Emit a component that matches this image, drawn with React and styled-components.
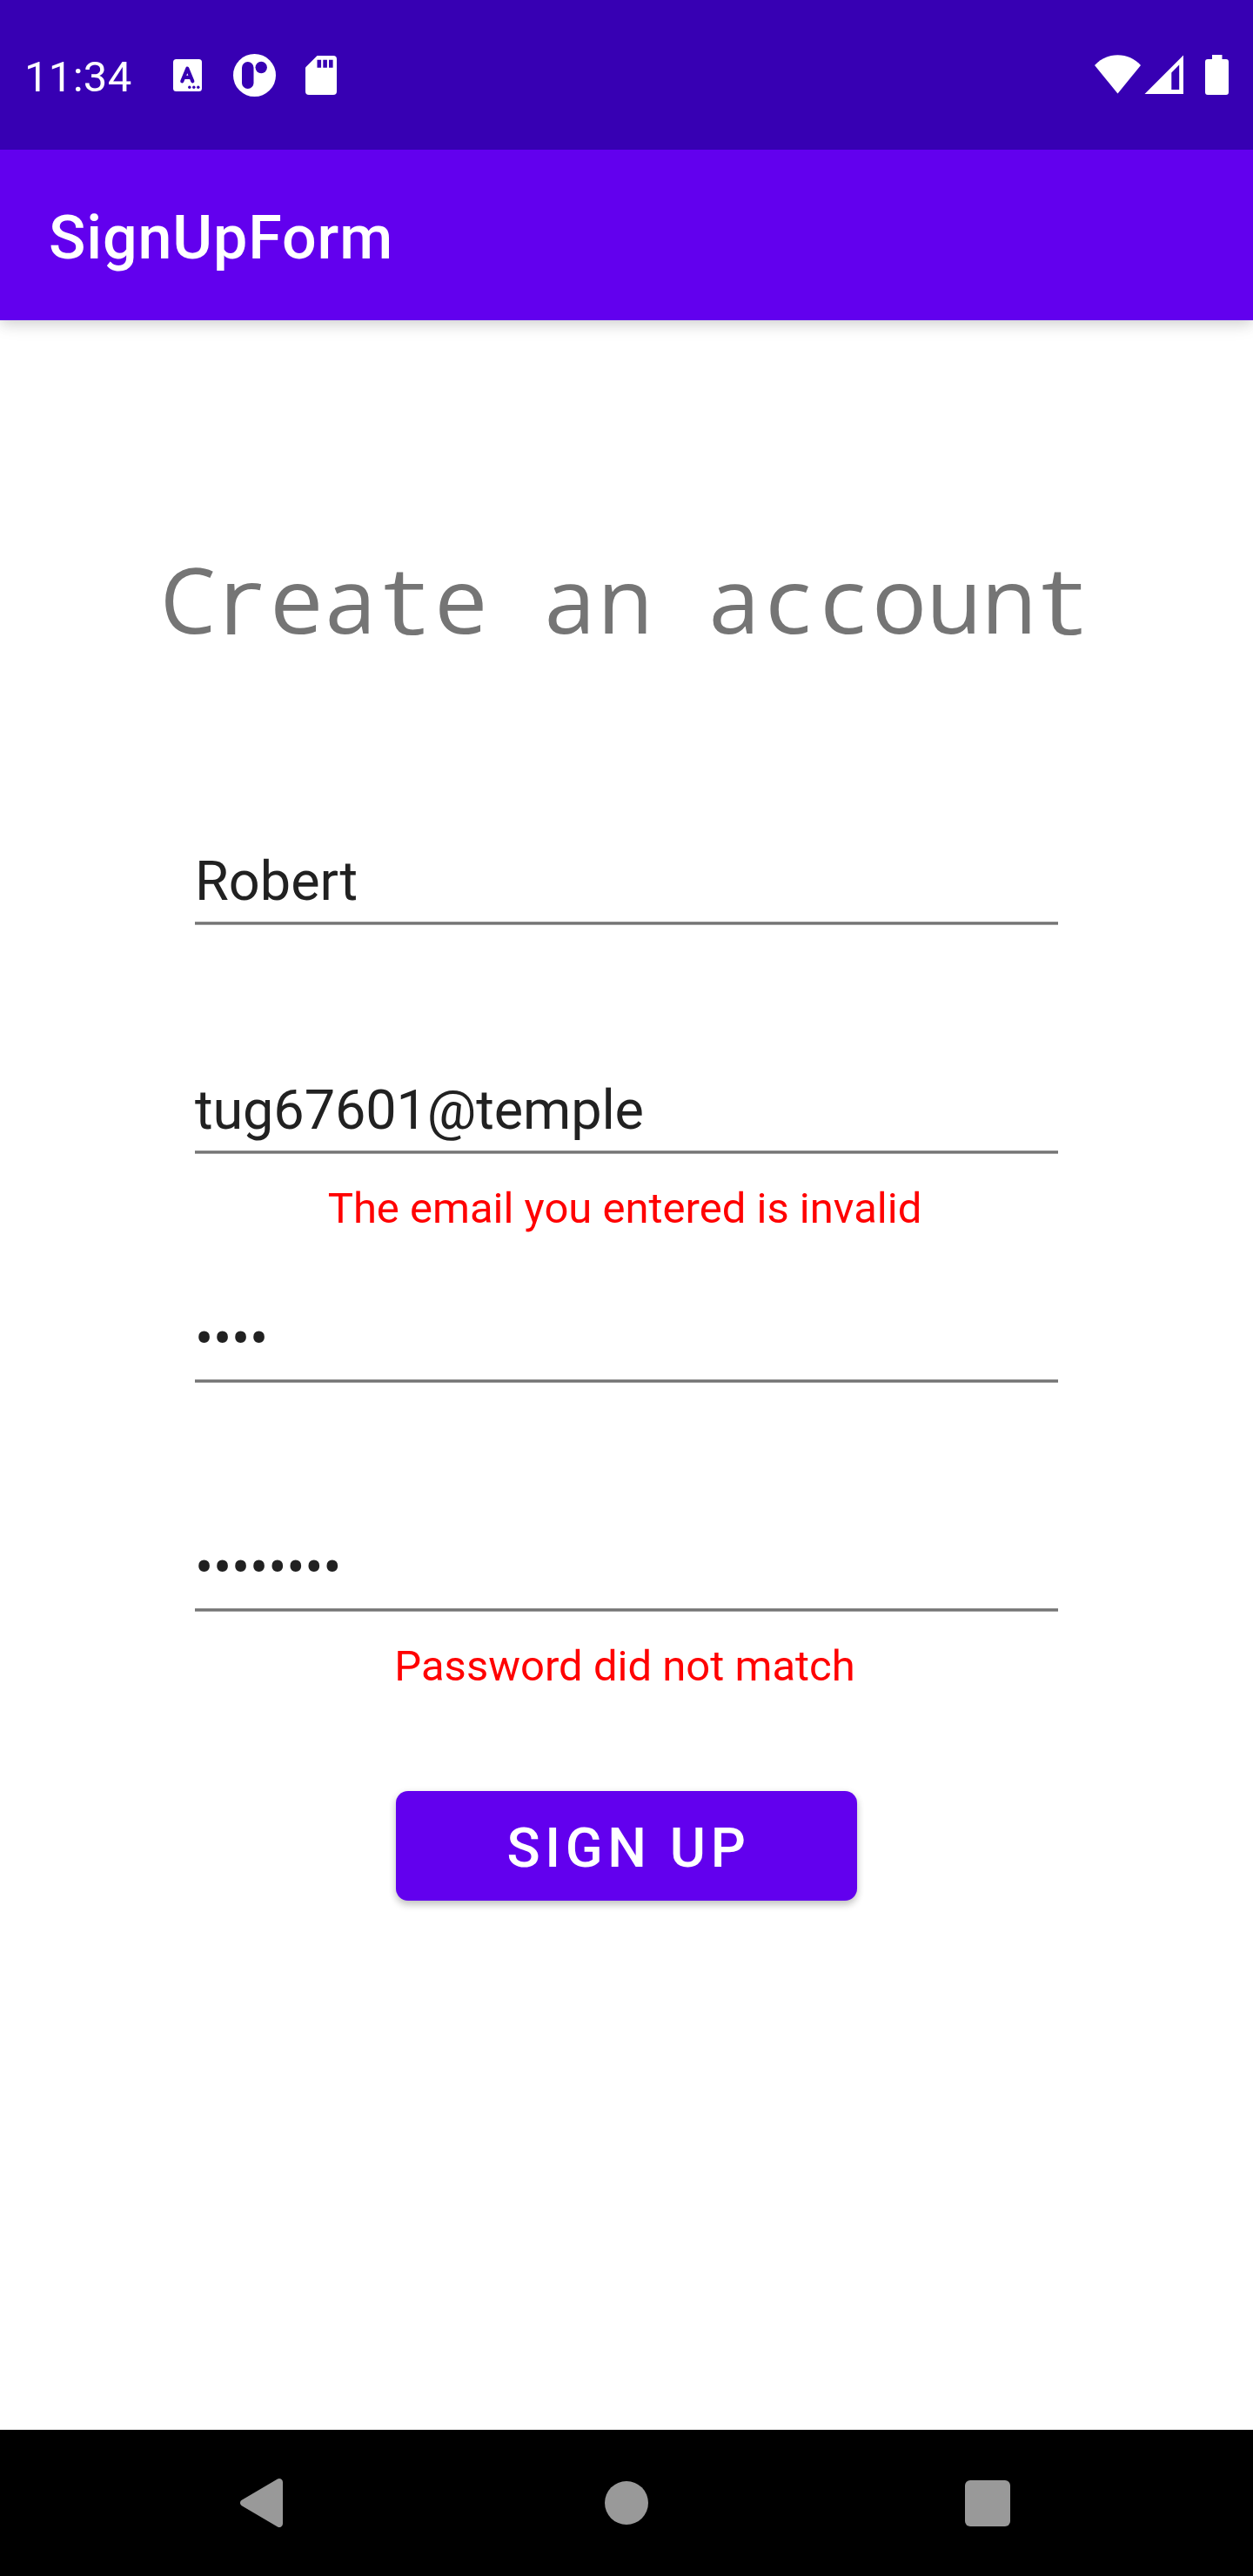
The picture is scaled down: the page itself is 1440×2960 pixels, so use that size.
import React from "react";
import styled, { createGlobalStyle } from "styled-components";

const GlobalStyle = createGlobalStyle`
  * { box-sizing: border-box; }
  html, body { margin: 0; padding: 0; background: #fff; }
  body { font-family: Roboto, "Noto Sans", sans-serif; }
`;

const Screen = styled.div`
  width: 1440px;
  height: 2960px;
  display: flex;
  flex-direction: column;
  background: #fff;
  overflow: hidden;
`;

const StatusBar = styled.header`
  position: relative;
  z-index: 1;
  flex: none;
  height: 172px;
  padding: 1px 28px 0;
  display: flex;
  align-items: center;
  background: #3700b3;
  color: #fff;
`;

const Clock = styled.span`
  width: 171px;
  padding-top: 5px;
  font-size: 49px;
  line-height: 58px;
  letter-spacing: 0.3px;
  white-space: nowrap;
`;

const Icon = styled.svg`
  flex: none;
  display: block;
  width: ${(p) => p.$w}px;
  height: ${(p) => p.$h}px;
  margin-left: ${(p) => p.$gap || 0}px;
`;

const Spacer = styled.div`
  flex: 1;
`;

const AppBar = styled.div`
  flex: none;
  height: 196px;
  padding: 0 56px;
  display: flex;
  align-items: center;
  background: #6200ee;
  color: #fff;
  box-shadow: 0 4px 14px rgba(0, 0, 0, 0.13), 0 8px 20px rgba(0, 0, 0, 0.06);
`;

const AppTitle = styled.h1`
  margin: 0;
  padding-top: 6px;
  font-size: 70px;
  font-weight: 500;
  line-height: 82px;
  letter-spacing: 0.875px;
`;

const Form = styled.main`
  flex: 1;
  display: flex;
  flex-direction: column;
  align-items: center;
  padding-top: 257px;
`;

const Heading = styled.h2`
  margin: 0 0 222px;
  display: flex;
  font-family: "Open Sans", "Noto Sans", sans-serif;
  font-size: 105px;
  font-weight: 400;
  line-height: 125px;
  color: #757575;
`;

const Letter = styled.span`
  width: 63px;
  display: flex;
  justify-content: center;
  white-space: pre;
  font-weight: ${(p) => (p.$thicken ? 300 : 400)};
  -webkit-text-stroke: ${(p) => p.$thicken}px #757575;
  transform: translateX(${(p) => p.$shift}px) scaleX(${(p) => p.$stretch});
`;

const Field = styled.div`
  width: 992px;
  height: 263px;
`;

const FieldValue = styled.div`
  height: 91px;
  padding-top: 4px;
  font-size: 63px;
  line-height: 74px;
  letter-spacing: ${(p) => p.$tracking || 0}px;
  color: #212121;
  background: linear-gradient(#8e8e8e 0 1px, #757575 1px 3px, #a2a2a2 3px 4px) bottom / 100% 4px no-repeat;
  white-space: nowrap;
`;

const FieldError = styled.div`
  padding-top: 34px;
  margin-left: -4px;
  font-size: 49px;
  line-height: 58px;
  text-align: center;
  color: #ff0000;
`;

const SubmitButton = styled.button`
  margin: 34px 0 0;
  width: 530px;
  height: 126px;
  padding: 6px 0 0 5px;
  border: 0;
  border-radius: 14px;
  background: #6200ee;
  color: #fff;
  font: 500 63px/74px Roboto, "Noto Sans", sans-serif;
  letter-spacing: 5.625px;
  box-shadow: 0 5px 8px rgba(0, 0, 0, 0.18), 0 2px 10px rgba(0, 0, 0, 0.1);
`;

const NavBar = styled.nav`
  flex: none;
  height: 168px;
  padding-left: 276px;
  display: flex;
  align-items: center;
  background: #000;
`;

/* shift, horizontal stretch and extra stroke that fit each glyph to a fixed-width cell */
const LETTER_FIT = {
  C: [-0.7, 0.965, 0],
  r: [-3.5, 1.2, 2.2],
  e: [-1.7, 1.035, 0],
  a: [-2, 1, 0],
  t: [-3, 1.32, 2.2],
  n: [-1.2, 1, 0],
  c: [-3.6, 1.06, 0],
  o: [-1.5, 1, 0],
  u: [-1.5, 1, 0],
  " ": [0, 1, 0],
};

function MonoHeading({ text }) {
  return (
    <Heading>
      {[...text].map((ch, i) => {
        const [shift, stretch, thicken] = LETTER_FIT[ch];
        return (
          <Letter key={i} $shift={shift} $stretch={stretch} $thicken={thicken}>
            {ch}
          </Letter>
        );
      })}
    </Heading>
  );
}

const FIELDS = [
  { value: "Robert" },
  { value: "tug67601@temple", error: "The email you entered is invalid", tracking: -0.12 },
  { value: "••••", tracking: -0.22 },
  { value: "••••••••", error: "Password did not match", tracking: -0.22 },
];

export default function App() {
  return (
    <>
      <GlobalStyle />
      <Screen>
        <StatusBar>
          <Clock>11:34</Clock>
          <Icon $w={33} $h={37} viewBox="0 0 33 37">
            <rect width="33" height="37" rx="3.5" fill="#fff" />
            <path d="M10.3 25.3 16.3 10.7 22.3 25.3M12.5 20.8h7.6" fill="none" stroke="#3700b3" strokeWidth="4.2" strokeLinecap="round" strokeLinejoin="round" />
            <circle cx="18.8" cy="32.3" r="1.7" fill="#3700b3" />
            <circle cx="23.8" cy="32.3" r="1.7" fill="#3700b3" />
            <circle cx="28.8" cy="32.3" r="1.7" fill="#3700b3" />
          </Icon>
          <Icon $w={49} $h={49} $gap={36} viewBox="0 0 49 49">
            <circle cx="24.5" cy="24.5" r="24.5" fill="#fff" />
            <rect x="10" y="9" width="13.5" height="31" rx="6.75" fill="#3700b3" />
            <circle cx="32.2" cy="15.5" r="6.7" fill="#3700b3" />
          </Icon>
          <Icon $w={36} $h={45} $gap={34} viewBox="0 0 36 45">
            <path d="M13.5 0H32a4 4 0 0 1 4 4v37a4 4 0 0 1-4 4H4a4 4 0 0 1-4-4V13.5Z" fill="#fff" />
            <path d="M13.5 4.7h4.6v9h-4.6zM20.3 4.7h4.6v9h-4.6zM27 4.7h4.6v9H27z" fill="#3700b3" />
          </Icon>
          <Spacer />
          <Icon $w={53} $h={47} viewBox="0 0 53 47">
            <path d="M0 12C7 4.500 16 .3 26.500 .3S46 4.500 53 12L26.500 44.500Z" fill="#fff" />
          </Icon>
          <Icon $w={45} $h={47} $gap={4} viewBox="0 0 45 47">
            <path fillRule="evenodd" d="M45 .5V45H.5ZM40.200 11.500 31.300 20.400V40h8.900Z" fill="#fff" />
          </Icon>
          <Icon $w={27} $h={47} $gap={25} viewBox="0 0 27 47">
            <path d="M8 0h11.500v5H24a3 3 0 0 1 3 3v35a3 3 0 0 1-3 3H3a3 3 0 0 1-3-3V8a3 3 0 0 1 3-3h5Z" fill="#fff" />
          </Icon>
        </StatusBar>
        <AppBar>
          <AppTitle>SignUpForm</AppTitle>
        </AppBar>
        <Form>
          <MonoHeading text="Create an account" />
          {FIELDS.map((field, i) => (
            <Field key={i}>
              <FieldValue $tracking={field.tracking}>{field.value}</FieldValue>
              {field.error && <FieldError>{field.error}</FieldError>}
            </Field>
          ))}
          <SubmitButton type="button">SIGN UP</SubmitButton>
        </Form>
        <NavBar>
          <Icon $w={49} $h={56} viewBox="0 0 49 56">
            <path d="M43 .6A4 4 0 0 1 49 4V52A4 4 0 0 1 43 55.400L1.800 31.200A3.700 3.700 0 0 1 1.800 24.800Z" fill="#999" />
          </Icon>
          <Icon $w={50} $h={50} $gap={370} viewBox="0 0 50 50">
            <circle cx="25" cy="25" r="25" fill="#999" />
          </Icon>
          <Icon $w={52} $h={53} $gap={364} viewBox="0 0 52 53">
            <rect width="52" height="53" rx="6" fill="#999" />
          </Icon>
        </NavBar>
      </Screen>
    </>
  );
}
